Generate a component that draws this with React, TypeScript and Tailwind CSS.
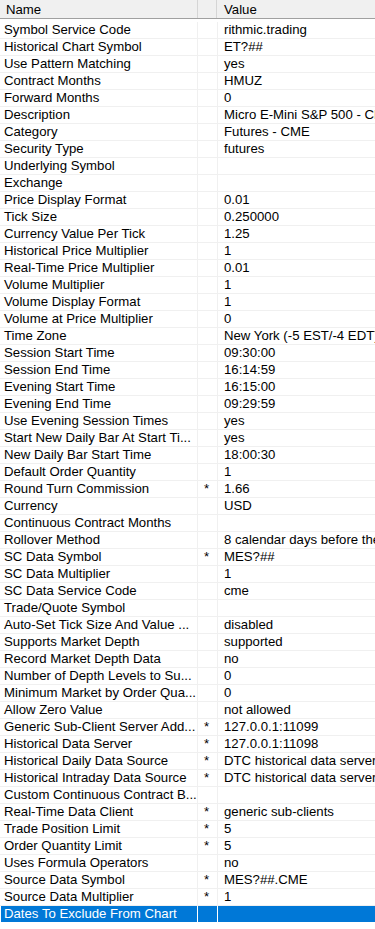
import React from "react";

type Row = { n: string; v: string; s?: boolean };

const rows: Row[] = [
  { n: "Symbol Service Code", v: "rithmic.trading" },
  { n: "Historical Chart Symbol", v: "ET?##" },
  { n: "Use Pattern Matching", v: "yes" },
  { n: "Contract Months", v: "HMUZ" },
  { n: "Forward Months", v: "0" },
  { n: "Description", v: "Micro E-Mini S&P 500 - CME" },
  { n: "Category", v: "Futures - CME" },
  { n: "Security Type", v: "futures" },
  { n: "Underlying Symbol", v: "" },
  { n: "Exchange", v: "" },
  { n: "Price Display Format", v: "0.01" },
  { n: "Tick Size", v: "0.250000" },
  { n: "Currency Value Per Tick", v: "1.25" },
  { n: "Historical Price Multiplier", v: "1" },
  { n: "Real-Time Price Multiplier", v: "0.01" },
  { n: "Volume Multiplier", v: "1" },
  { n: "Volume Display Format", v: "1" },
  { n: "Volume at Price Multiplier", v: "0" },
  { n: "Time Zone", v: "New York (-5 EST/-4 EDT)" },
  { n: "Session Start Time", v: "09:30:00" },
  { n: "Session End Time", v: "16:14:59" },
  { n: "Evening Start Time", v: "16:15:00" },
  { n: "Evening End Time", v: "09:29:59" },
  { n: "Use Evening Session Times", v: "yes" },
  { n: "Start New Daily Bar At Start Ti...", v: "yes" },
  { n: "New Daily Bar Start Time", v: "18:00:30" },
  { n: "Default Order Quantity", v: "1" },
  { n: "Round Turn Commission", v: "1.66", s: true },
  { n: "Currency", v: "USD" },
  { n: "Continuous Contract Months", v: "" },
  { n: "Rollover Method", v: "8 calendar days before the expiration" },
  { n: "SC Data Symbol", v: "MES?##", s: true },
  { n: "SC Data Multiplier", v: "1" },
  { n: "SC Data Service Code", v: "cme" },
  { n: "Trade/Quote Symbol", v: "" },
  { n: "Auto-Set Tick Size And Value ...", v: "disabled" },
  { n: "Supports Market Depth", v: "supported" },
  { n: "Record Market Depth Data", v: "no" },
  { n: "Number of Depth Levels to Su...", v: "0" },
  { n: "Minimum Market by Order Qua...", v: "0" },
  { n: "Allow Zero Value", v: "not allowed" },
  { n: "Generic Sub-Client Server Add...", v: "127.0.0.1:11099", s: true },
  { n: "Historical Data Server", v: "127.0.0.1:11098", s: true },
  { n: "Historical Daily Data Source", v: "DTC historical data server", s: true },
  { n: "Historical Intraday Data Source", v: "DTC historical data server", s: true },
  { n: "Custom Continuous Contract B...", v: "" },
  { n: "Real-Time Data Client", v: "generic sub-clients", s: true },
  { n: "Trade Position Limit", v: "5", s: true },
  { n: "Order Quantity Limit", v: "5", s: true },
  { n: "Uses Formula Operators", v: "no" },
  { n: "Source Data Symbol", v: "MES?##.CME", s: true },
  { n: "Source Data Multiplier", v: "1", s: true },
  { n: "Dates To Exclude From Chart", v: "" },
];

export default function App() {
  return (
    <div
      className="w-[375px] h-[929px] bg-white overflow-hidden text-[13.2px] leading-[16px] text-black"
      style={{ fontFamily: '"Liberation Sans", Arial, sans-serif' }}
    >
      <div className="flex h-[19px] bg-[#f0f0f0] border-b border-[#a0a0a0]">
        <div className="w-[198px] border-r border-[#d5d5d5] pl-[6px] pt-[2px] whitespace-nowrap">Name</div>
        <div className="w-[19px] border-r border-[#d5d5d5]"></div>
        <div className="flex-1 pl-[7px] pt-[2px] whitespace-nowrap">Value</div>
      </div>
      <div className="pt-[3px]">
        {rows.map((r, i) => {
          const sel = i === rows.length - 1;
          return (
            <div
              key={i}
              className={
                "flex h-[17px] border-b " +
                (sel ? "border-white text-white" : "border-[#f0f0f0]")
              }
            >
              <div
                className={
                  "w-[197px] ml-[1px] pl-[3px] border-r overflow-hidden whitespace-nowrap " +
                  (sel ? "bg-[#0078d7] border-white" : "border-[#f0f0f0]")
                }
              >
                {r.n}
              </div>
              <div
                className={
                  "w-[20px] border-r overflow-hidden whitespace-nowrap pl-[6px] " +
                  (sel ? "bg-[#0078d7] border-white" : "border-[#f0f0f0]")
                }
              >
                {r.s ? "*" : ""}
              </div>
              <div
                className={
                  "flex-1 pl-[6px] overflow-hidden whitespace-nowrap " + (sel ? "bg-[#0078d7]" : "")
                }
              >
                {r.v}
              </div>
            </div>
          );
        })}
      </div>
    </div>
  );
}
